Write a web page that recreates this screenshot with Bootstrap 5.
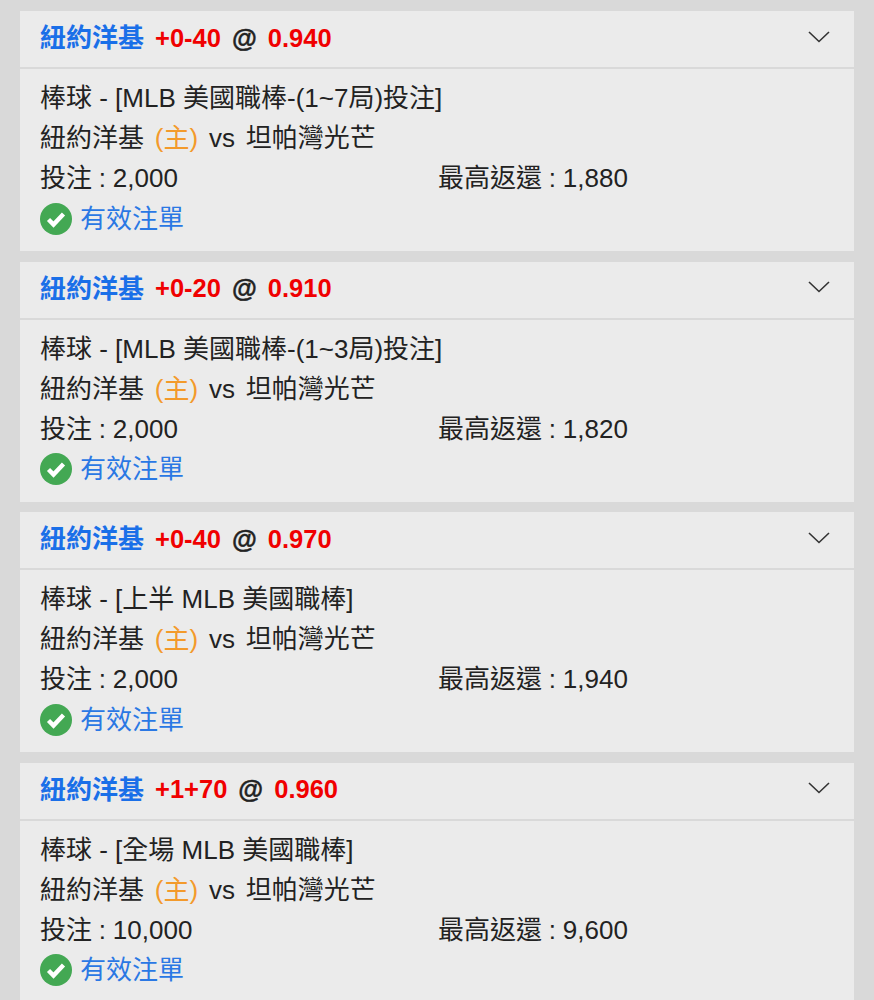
<!DOCTYPE html>
<html lang="zh-Hant">
<head>
  <meta charset="UTF-8" />
  <meta name="viewport" content="width=device-width, initial-scale=1.0"/>
  <title>注單</title>
  <link href="https://cdn.jsdelivr.net/npm/bootstrap@5.3.0/dist/css/bootstrap.min.css" rel="stylesheet"/>
  <style>
    body {
      background-color: #d9d9d9;
      font-family: "Liberation Sans", "Noto Sans CJK TC", sans-serif;
      font-size: 26px;
      color: #222;
      height: 1000px;
      overflow: hidden;
    }

    .bet-list {
      padding: 11.4px 20px 0;
      display: flex;
      flex-direction: column;
      gap: 10.5px;
    }

    .bet-card {
      background-color: #ebebeb;
      height: 240px;
      flex: none;
    }

    .bet-head {
      height: 58px;
      padding: 0 23px 2px 20px;
      border-bottom: 2px solid #d9d9d9;
      font-weight: 700;
      line-height: 1;
    }

    .head-text { gap: 11px; }
    .head-nums { font-size: 25.5px; }
    .head-at { -webkit-text-stroke: 0.4px #222; }
    .team-name { color: #1a6fe8; }
    .odds-val { color: #f00000; }
    .home-tag { color: #f39a2b; }
    .valid-text { color: #2a78e4; }

    .bet-body {
      padding: 9px 20px 0;
      line-height: 40px;
    }

    .match-line { word-spacing: 3.6px; }
    .stake-line { word-spacing: -0.4px; }
    .stake-col { width: 398px; }
    .status-line { height: 41px; }

    .head-chevron { margin-top: -3px; }

    .check-icon {
      width: 32px;
      height: 32px;
      margin-right: 8px;
    }
  </style>
</head>
<body>
  <div class="bet-list" id="bet-list"></div>

  <script>
    const bets = [
      { line: '+0-40', odds: '0.940', league: '棒球 - [MLB 美國職棒-(1~7局)投注]', stake: '2,000', payout: '1,880' },
      { line: '+0-20', odds: '0.910', league: '棒球 - [MLB 美國職棒-(1~3局)投注]', stake: '2,000', payout: '1,820' },
      { line: '+0-40', odds: '0.970', league: '棒球 - [上半 MLB 美國職棒]', stake: '2,000', payout: '1,940' },
      { line: '+1+70', odds: '0.960', league: '棒球 - [全場 MLB 美國職棒]', stake: '10,000', payout: '9,600' }
    ];

    document.getElementById('bet-list').innerHTML = bets.map(b => `
      <div class="bet-card">
        <div class="bet-head d-flex align-items-center justify-content-between">
          <div class="head-text d-flex align-items-center">
            <span class="team-name">紐約洋基</span>
            <span class="odds-val head-nums">${b.line}</span>
            <span class="head-nums head-at">@</span>
            <span class="odds-val head-nums">${b.odds}</span>
          </div>
          <svg class="head-chevron" width="24" height="14" viewBox="0 0 24 14" fill="none" stroke="#333" stroke-width="1.6"><path d="M2 2l10 9.5L22 2"/></svg>
        </div>
        <div class="bet-body">
          <div>${b.league}</div>
          <div class="match-line">紐約洋基 <span class="home-tag">(主)</span> vs 坦帕灣光芒</div>
          <div class="stake-line d-flex"><div class="stake-col">投注 : ${b.stake}</div><div>最高返還 : ${b.payout}</div></div>
          <div class="status-line d-flex align-items-center">
            <svg class="check-icon" viewBox="0 0 32 32"><circle cx="16" cy="16" r="16" fill="#43a853"/><path d="M8.5 16.5l5 5 10-10.5" fill="none" stroke="#fff" stroke-width="4.4"/></svg>
            <span class="valid-text">有效注單</span>
          </div>
        </div>
      </div>`).join('');
  </script>
</body>
</html>
